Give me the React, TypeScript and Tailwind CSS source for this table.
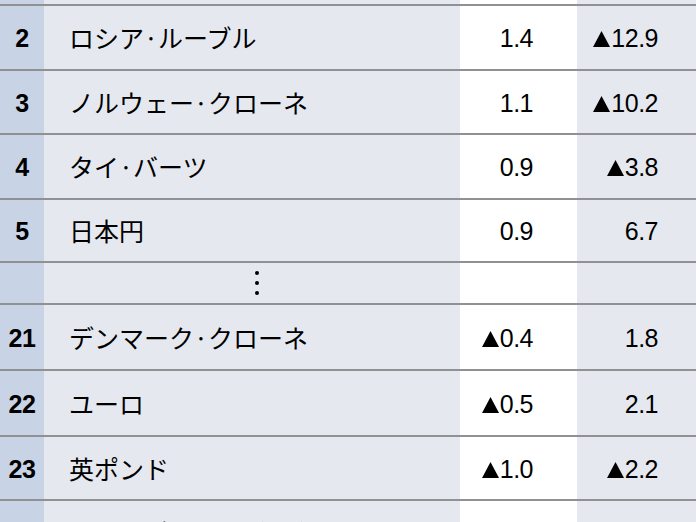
import React from "react";

type Row = {
  rank?: string;
  name?: string;
  a?: string;
  b?: string;
  h: number;
  gap?: boolean;
  last?: boolean;
};

// row heights follow the ruled lines of the table
const rows: Row[] = [
  { rank: "2", name: "ロシア·ルーブル", a: "1.4", b: "▲12.9", h: 63 },
  { rank: "3", name: "ノルウェー·クローネ", a: "1.1", b: "▲10.2", h: 62 },
  { rank: "4", name: "タイ·バーツ", a: "0.9", b: "▲3.8", h: 63 },
  { rank: "5", name: "日本円", a: "0.9", b: "6.7", h: 61 },
  { gap: true, h: 40 },
  { rank: "21", name: "デンマーク·クローネ", a: "▲0.4", b: "1.8", h: 64 },
  { rank: "22", name: "ユーロ", a: "▲0.5", b: "2.1", h: 64 },
  { rank: "23", name: "英ポンド", a: "▲1.0", b: "▲2.2", h: 62 },
  { rank: "24", name: "ニュージーランド·ドル", a: "▲1.2", b: "▲3.5", h: 64, last: true },
];

const num = { fontFamily: '"Liberation Sans", Arial, sans-serif' };
const jp = { fontFamily: '"Noto Sans CJK JP", "Noto Sans", sans-serif' };

const Line = () => <div className="h-[2px] w-full bg-[#8f9193]" />;

const Cells: React.FC<{ h: number; children?: React.ReactNode }> = ({ h, children }) => (
  <div className="grid grid-cols-[44px_416px_117px_1fr]" style={{ height: h }}>
    {children}
  </div>
);

// numbers with a leading ▲ (minus sign in Japanese tables)
const Num: React.FC<{ v?: string }> = ({ v }) => {
  if (!v) return null;
  const neg = v.startsWith("▲");
  return (
    <span className="flex items-baseline text-[25px] leading-none tracking-[-0.5px]" style={num}>
      {neg && (
        <svg width="17" height="16" viewBox="0 0 17 16" className="mr-[1px]" aria-label="▲">
          <polygon points="8.5,0 17,16 0,16" fill="#000" />
        </svg>
      )}
      {neg ? v.slice(1) : v}
    </span>
  );
};

export default function App() {
  return (
    <div className="w-[696px] h-[522px] overflow-hidden bg-[#e5e9ef] text-black">
      <Cells h={4}>
        <div className="bg-[#c8d4e5]" />
        <div className="bg-[#e5e9ef]" />
        <div className="bg-white" />
        <div className="bg-[#e5e9ef]" />
      </Cells>
      {rows.map((r, i) => (
        <div key={i}>
          <Line />
          <Cells h={r.h}>
            <div className={`bg-[#c8d4e5] flex justify-center ${r.last ? "items-start pt-[18px]" : "items-center pt-[2px]"}`}>
              <span className="text-[25px] font-bold leading-none tracking-[-0.5px]" style={num}>
                {r.rank}
              </span>
            </div>
            <div className={`bg-[#e5e9ef] flex pl-[25px] ${r.last ? "items-start pt-[17px]" : "items-center"}`}>
              {r.gap ? (
                <div className="flex flex-col gap-[6px] ml-[186px]">
                  <span className="w-[4px] h-[4px] rounded-full bg-black" />
                  <span className="w-[4px] h-[4px] rounded-full bg-black" />
                  <span className="w-[4px] h-[4px] rounded-full bg-black" />
                </div>
              ) : (
                <span className="text-[25px] leading-none" style={jp}>
                  {r.name}
                </span>
              )}
            </div>
            <div className={`bg-white flex justify-end pr-[44px] ${r.last ? "items-start pt-[18px]" : "items-center pt-[2px]"}`}>
              <Num v={r.a} />
            </div>
            <div className={`bg-[#e5e9ef] flex justify-end pr-[38px] ${r.last ? "items-start pt-[18px]" : "items-center pt-[2px]"}`}>
              <Num v={r.b} />
            </div>
          </Cells>
        </div>
      ))}
    </div>
  );
}
